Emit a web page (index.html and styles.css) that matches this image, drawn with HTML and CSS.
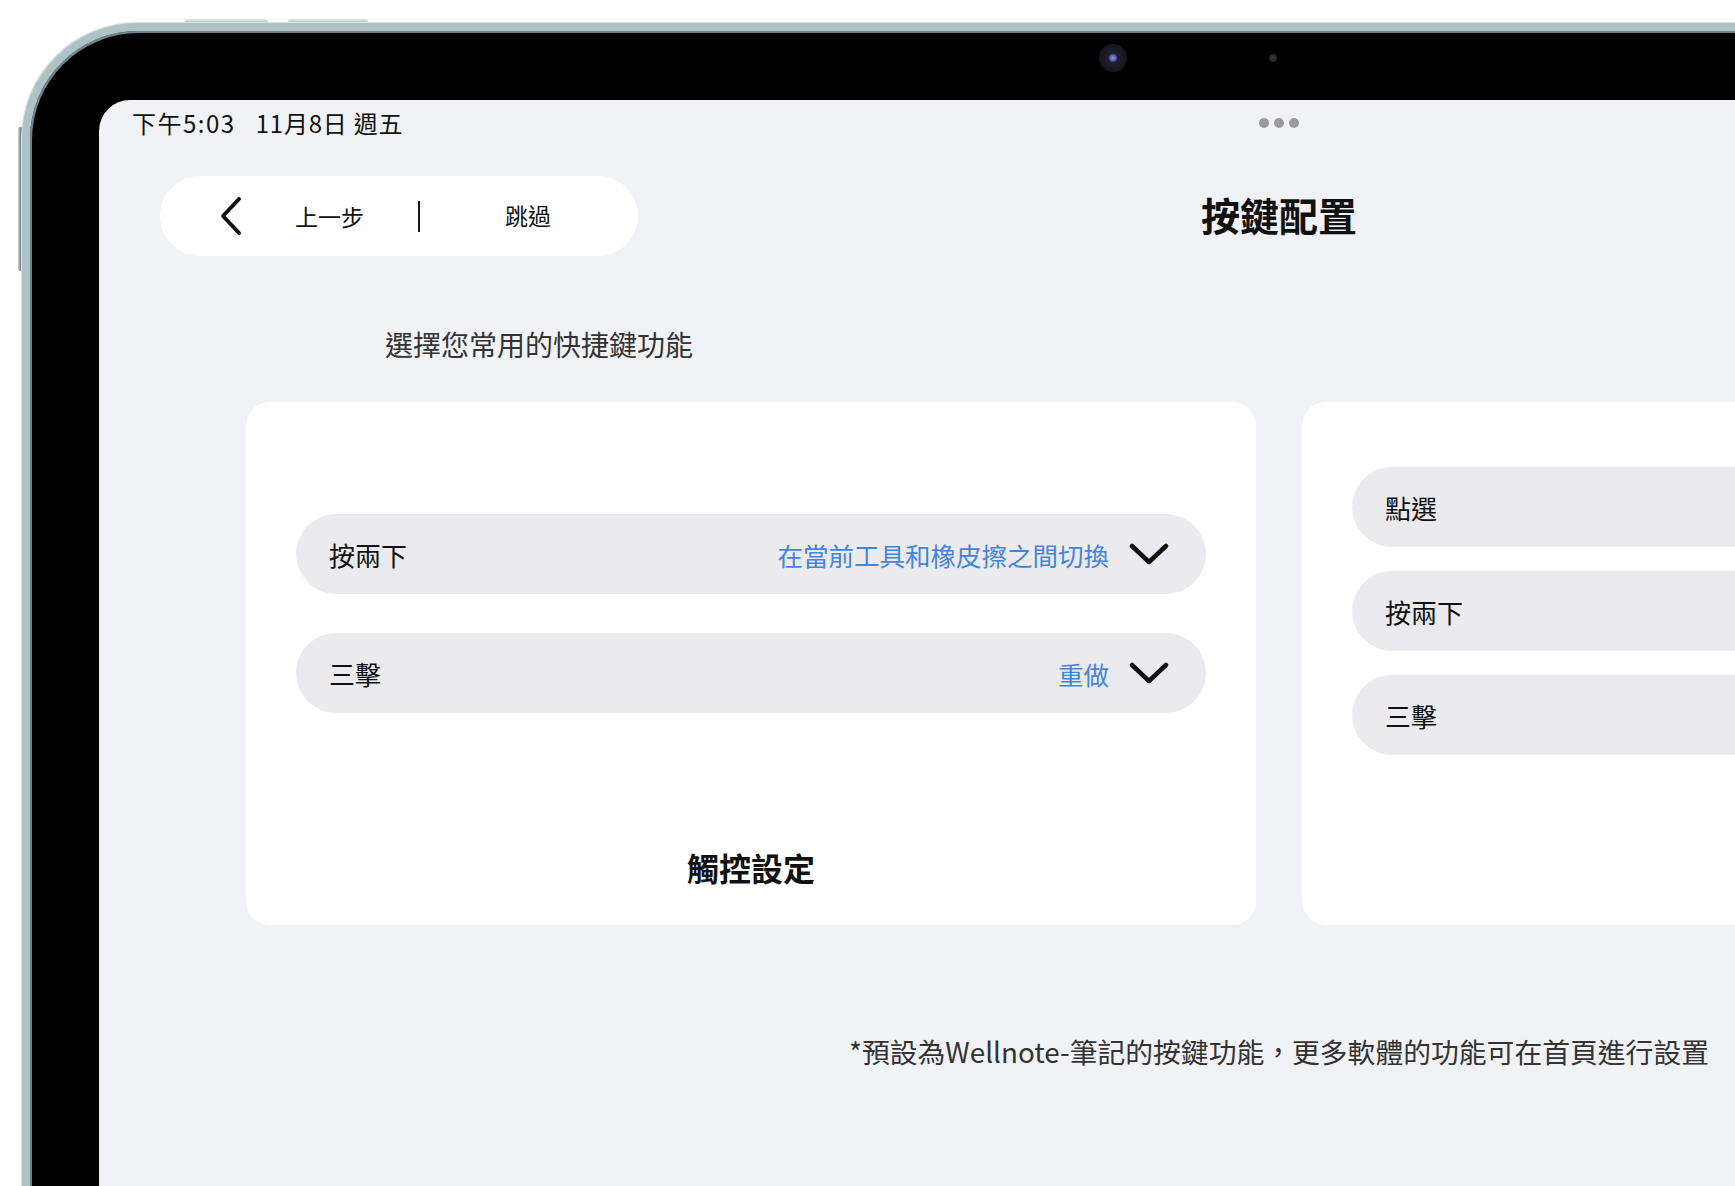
FILE: index.html
```html
<!DOCTYPE html>
<html lang="zh-Hant">
<head>
<meta charset="utf-8">
<title>按鍵配置</title>
<link rel="stylesheet" href="styles.css">
</head>
<body>
<div class="rig">
  <div class="top-buttons"><span class="vol vol-a"></span><span class="vol vol-b"></span></div>
  <div class="device-row">
    <div class="side"><span class="side-btn"></span></div>
    <div class="device">
      <div class="bezel-top"><span class="camera"><span class="lens"></span></span><span class="sensor"></span></div>
      <div class="screen">
        <div class="status">
          <div class="status-time"><span class="st-time">下午5:03</span><span class="st-date">11月8日 週五</span></div>
          <div class="dots"><i></i><i></i><i></i></div>
          <div></div>
        </div>
        <div class="header">
          <div class="nav-pill">
            <svg class="back-icon" width="24" height="40" viewBox="0 0 24 40"><polyline points="20,3 4,20 20,37" fill="none" stroke="#111" stroke-width="4" stroke-linecap="round" stroke-linejoin="round"/></svg>
            <span class="nav-back">上一步</span>
            <span class="nav-divider"></span>
            <span class="nav-skip">跳過</span>
          </div>
          <h1 class="title">按鍵配置</h1>
          <div></div>
        </div>
        <p class="subtitle">選擇您常用的快捷鍵功能</p>
        <div class="cards">
          <section class="card card-left">
            <div class="rows rows-left">
              <div class="row">
                <span class="row-label">按兩下</span>
                <span class="row-value">在當前工具和橡皮擦之間切換</span>
                <svg class="chev" width="40" height="22" viewBox="0 0 40 22"><polyline points="3,3 20,19 37,3" fill="none" stroke="#111" stroke-width="4.5" stroke-linecap="round" stroke-linejoin="round"/></svg>
              </div>
              <div class="row">
                <span class="row-label">三擊</span>
                <span class="row-value">重做</span>
                <svg class="chev" width="40" height="22" viewBox="0 0 40 22"><polyline points="3,3 20,19 37,3" fill="none" stroke="#111" stroke-width="4.5" stroke-linecap="round" stroke-linejoin="round"/></svg>
              </div>
            </div>
            <h2 class="card-title">觸控設定</h2>
          </section>
          <section class="card card-right">
            <div class="rows rows-right">
              <div class="row"><span class="row-label">點選</span></div>
              <div class="row"><span class="row-label">按兩下</span></div>
              <div class="row"><span class="row-label">三擊</span></div>
            </div>
          </section>
        </div>
        <p class="footnote">*預設為Wellnote-筆記的按鍵功能，更多軟體的功能可在首頁進行設置</p>
      </div>
    </div>
  </div>
</div>
</body>
</html>
```
FILE: styles.css
```css
* { box-sizing: border-box; }

html, body {
  margin: 0;
  padding: 0;
  background: #ffffff;
  overflow: hidden;
  width: 1735px;
  height: 1186px;
}

body {
  font-family: "Noto Sans CJK TC", "Noto Sans", sans-serif;
  color: #111;
}

.rig {
  width: 2600px;
}

.top-buttons {
  display: flex;
  align-items: flex-end;
  gap: 20px;
  height: 23px;
  padding-left: 185px;
}

.vol {
  display: block;
  height: 4px;
  border-radius: 2px 2px 0 0;
  background: linear-gradient(#dfe8e9, #b4c6c9);
}
.vol-a { width: 83px; }
.vol-b { width: 80px; }

.device-row {
  display: flex;
  align-items: flex-start;
}

.side {
  width: 22px;
  flex: none;
}

.side-btn {
  display: block;
  margin: 104px 0 0 18px;
  width: 4px;
  height: 144px;
  border-radius: 2px 0 0 2px;
  background: linear-gradient(90deg, #c9d7d9, #4e5c5f);
}

.device {
  flex: none;
  background: #000;
  border: 8px solid #aec3c6;
  border-right: none;
  border-bottom: none;
  border-radius: 116px 0 0 0;
  padding-left: 69px;
  box-shadow: inset 1px 1px 0 1px #6f8588, -1px -1px 0 0 #d4e0e2;
}

.bezel-top {
  height: 69px;
  display: flex;
  align-items: center;
  padding-bottom: 15px;
}

.camera {
  margin-left: 1000px;
  width: 28px;
  height: 28px;
  border-radius: 50%;
  background: radial-gradient(circle, #23243a 0%, #16161c 70%, #0b0b0d 100%);
  display: flex;
  align-items: center;
  justify-content: center;
}

.lens {
  width: 8px;
  height: 8px;
  border-radius: 50%;
  background: radial-gradient(circle, #8f9be0 0%, #4a57a0 60%, #1d2040 100%);
}

.sensor {
  margin-left: 142px;
  width: 8px;
  height: 8px;
  border-radius: 50%;
  background: radial-gradient(circle, #3a3a3a 0%, #1a1a1a 100%);
}

.screen {
  width: 2360px;
  height: 1300px;
  background: #f1f2f6;
  border-radius: 31px 0 0 0;
  padding-top: 9px;
}

.status {
  display: grid;
  grid-template-columns: 1fr auto 1fr;
  align-items: center;
  height: 28px;
  padding: 0 33px;
}

.status-time {
  display: flex;
  gap: 20px;
  font-size: 24px;
  line-height: 28px;
  color: #111;
}

.st-time { letter-spacing: 1.5px; }
.st-date { letter-spacing: 0.8px; }

.dots {
  display: flex;
  gap: 5px;
}

.dots i {
  display: block;
  width: 10px;
  height: 10px;
  border-radius: 50%;
  background: #9b9b9f;
}

.header {
  display: grid;
  grid-template-columns: 1fr auto 1fr;
  align-items: center;
  margin-top: 39px;
  height: 80px;
  padding: 0 61px;
}

.nav-pill {
  width: 478px;
  height: 80px;
  border-radius: 40px;
  background: #fff;
  display: flex;
  align-items: center;
  padding-left: 59px;
  font-size: 23px;
}

.back-icon {
  flex: none;
}

.nav-back {
  margin-left: 52px;
}

.nav-divider {
  display: block;
  margin-left: 54px;
  width: 2px;
  height: 31px;
  background: #1a1a1a;
}

.nav-skip {
  flex: 1;
  text-align: center;
  padding-right: 2px;
  margin-top: -3px;
}

.title {
  margin: -4px 0 0;
  font-size: 39px;
  font-weight: 700;
  line-height: 48px;
  color: #111;
}

.subtitle {
  margin: 68px 0 0;
  padding-left: 286px;
  font-size: 28px;
  line-height: 40px;
  color: #333;
}

.cards {
  margin-top: 38px;
  display: flex;
  justify-content: center;
  gap: 46px;
}

.card {
  width: 1010px;
  height: 523px;
  background: #fff;
  border-radius: 24px;
  display: flex;
  flex-direction: column;
  padding: 0 50px;
}

.card-left { padding-top: 112px; }
.card-right { padding-top: 65px; }

.rows {
  display: flex;
  flex-direction: column;
}
.rows-left { gap: 39px; }
.rows-right { gap: 24px; }

.row {
  height: 80px;
  border-radius: 40px;
  background: #ebebef;
  display: flex;
  align-items: center;
  padding: 0 37px 0 33px;
  font-size: 26px;
}

.row-label {
  flex: 1;
  color: #111;
}

.row-value {
  color: #4584dc;
  margin-right: 20px;
  font-size: 25.5px;
}

.chev {
  flex: none;
}

.card-title {
  margin: auto 0 0;
  padding-bottom: 38px;
  text-align: center;
  font-size: 32px;
  font-weight: 600;
  line-height: 40px;
  color: #111;
}

.footnote {
  margin: 106px 0 0;
  text-align: center;
  font-size: 27.8px;
  line-height: 40px;
  color: #333;
}
```
